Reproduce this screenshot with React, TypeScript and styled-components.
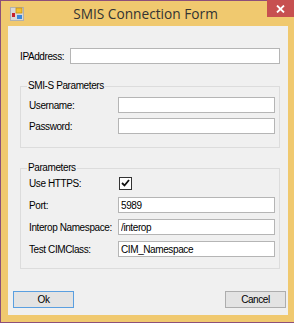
import React, { useState } from 'react';
import styled, { createGlobalStyle } from 'styled-components';

const GlobalStyle = createGlobalStyle`
  html, body {
    margin: 0;
    padding: 0;
    background: #ffffff;
  }
  body {
    font-family: 'Liberation Sans', Arial, sans-serif;
  }
`;

const Window = styled.div`
  width: 294px;
  height: 323px;
  box-sizing: border-box;
  background: #f0c96f;
  border: 1px solid #8d4f7a;
  border-right: none;
  display: flex;
  flex-direction: column;
`;

const TitleBar = styled.div`
  height: 25px;
  display: flex;
  align-items: flex-start;
`;

const AppIcon = styled.svg`
  margin: 6px 0 0 9px;
  width: 14px;
  height: 14px;
  flex: none;
`;

const Title = styled.div`
  flex: 1;
  text-align: center;
  font-family: 'Open Sans', 'Liberation Sans', sans-serif;
  font-size: 13.7px;
  color: #333333;
  line-height: 25px;
  white-space: nowrap;
`;

const CloseButton = styled.div`
  width: 27px;
  height: 17px;
  flex: none;
  margin-top: -1px;
  background: #c75050;
  display: flex;
  align-items: center;
  justify-content: center;
`;

const Client = styled.div`
  margin: 0 6px 0 7px;
  height: 289px;
  background: #f0f0f0;
  box-sizing: border-box;
  padding: 22px 0 0 12px;
  font-size: 10px;
  letter-spacing: -0.4px;
  color: #000000;
  display: flex;
  flex-direction: column;
`;

const Row = styled.div<{ $labelWidth: number }>`
  display: flex;
  align-items: center;
  height: 16px;
  flex: none;

  & > label {
    width: ${({ $labelWidth }) => $labelWidth}px;
    flex: none;
    white-space: nowrap;
  }
`;

const TextBox = styled.input<{ $width: number }>`
  width: ${({ $width }) => $width}px;
  height: 16px;
  box-sizing: border-box;
  border: 1px solid #b5b5b5;
  background: #ffffff;
  padding: 0 2px;
  font-family: 'Liberation Sans', Arial, sans-serif;
  font-size: 10px;
  letter-spacing: -0.4px;
  color: #000000;
  outline: none;
`;

const Group = styled.div<{ $height: number; $top: number; $padTop: number; $gap: number }>`
  position: relative;
  width: 260px;
  height: ${({ $height }) => $height}px;
  box-sizing: border-box;
  margin-top: ${({ $top }) => $top}px;
  padding: ${({ $padTop }) => $padTop}px 0 0 8px;
  border: 1px solid #dcdcdc;
  display: flex;
  flex-direction: column;
  gap: ${({ $gap }) => $gap}px;
  flex: none;
`;

const Caption = styled.span`
  position: absolute;
  top: -7px;
  left: 6px;
  padding: 0 1px;
  line-height: 12px;
  background: #f0f0f0;
`;

const CheckBox = styled.div`
  width: 13px;
  height: 13px;
  box-sizing: border-box;
  border: 1px solid #333333;
  background: #ffffff;
  display: flex;
  align-items: center;
  justify-content: center;
  margin-left: 1px;
`;

const ButtonBar = styled.div`
  margin-top: auto;
  margin-bottom: 7px;
  margin-left: -7px;
  margin-right: 2px;
  display: flex;
  justify-content: space-between;
`;

const Button = styled.button<{ $default?: boolean }>`
  width: 61px;
  height: 17px;
  box-sizing: border-box;
  padding: 0;
  border: 1px solid ${({ $default }) => ($default ? '#5a9fe0' : '#adadad')};
  background: #e3e3e3;
  font-family: 'Liberation Sans', Arial, sans-serif;
  font-size: 10px;
  letter-spacing: -0.4px;
  color: #000000;
`;

export default function App() {
  const [ip, setIp] = useState('');
  const [user, setUser] = useState('');
  const [pass, setPass] = useState('');
  const [port, setPort] = useState('5989');
  const [ns, setNs] = useState('/interop');
  const [cim, setCim] = useState('CIM_Namespace');

  return (
    <>
      <GlobalStyle />
      <Window>
        <TitleBar>
          <AppIcon viewBox="0 0 14 14">
            <rect x="0.5" y="0.5" width="13" height="13" fill="#d8d8d8" stroke="#b0b0b0" />
            <rect x="6" y="1" width="6" height="5" fill="#f2c02e" stroke="#c98f10" strokeWidth="0.8" />
            <rect x="2" y="6" width="3" height="4" fill="#c8202a" />
            <rect x="7" y="8" width="5" height="4" fill="#3a86d8" />
          </AppIcon>
          <Title>SMIS Connection Form</Title>
          <CloseButton>
            <svg width="9" height="8" viewBox="0 0 9 8">
              <path d="M1 0.5 L8 7.5 M8 0.5 L1 7.5" stroke="#ffffff" strokeWidth="1.8" />
            </svg>
          </CloseButton>
        </TitleBar>
        <Client>
          <Row $labelWidth={50}>
            <label>IPAddress:</label>
            <TextBox $width={210} value={ip} onChange={(e) => setIp(e.target.value)} />
          </Row>

          <Group $height={62} $top={22} $padTop={10} $gap={5}>
            <Caption>SMI-S Parameters</Caption>
            <Row $labelWidth={89}>
              <label>Username:</label>
              <TextBox $width={157} value={user} onChange={(e) => setUser(e.target.value)} />
            </Row>
            <Row $labelWidth={89}>
              <label>Password:</label>
              <TextBox $width={157} type="text" value={pass} onChange={(e) => setPass(e.target.value)} />
            </Row>
          </Group>

          <Group $height={101} $top={20} $padTop={6} $gap={6}>
            <Caption>Parameters</Caption>
            <Row $labelWidth={89}>
              <label>Use HTTPS:</label>
              <CheckBox>
                <svg width="9" height="8" viewBox="0 0 9 8">
                  <path d="M1 4 L3.5 6.5 L8 1" stroke="#111" strokeWidth="1.8" fill="none" />
                </svg>
              </CheckBox>
            </Row>
            <Row $labelWidth={89}>
              <label>Port:</label>
              <TextBox $width={157} value={port} onChange={(e) => setPort(e.target.value)} />
            </Row>
            <Row $labelWidth={89}>
              <label>Interop Namespace:</label>
              <TextBox $width={157} value={ns} onChange={(e) => setNs(e.target.value)} />
            </Row>
            <Row $labelWidth={89}>
              <label>Test CIMClass:</label>
              <TextBox $width={157} value={cim} onChange={(e) => setCim(e.target.value)} />
            </Row>
          </Group>

          <ButtonBar>
            <Button $default>Ok</Button>
            <Button>Cancel</Button>
          </ButtonBar>
        </Client>
      </Window>
    </>
  );
}
